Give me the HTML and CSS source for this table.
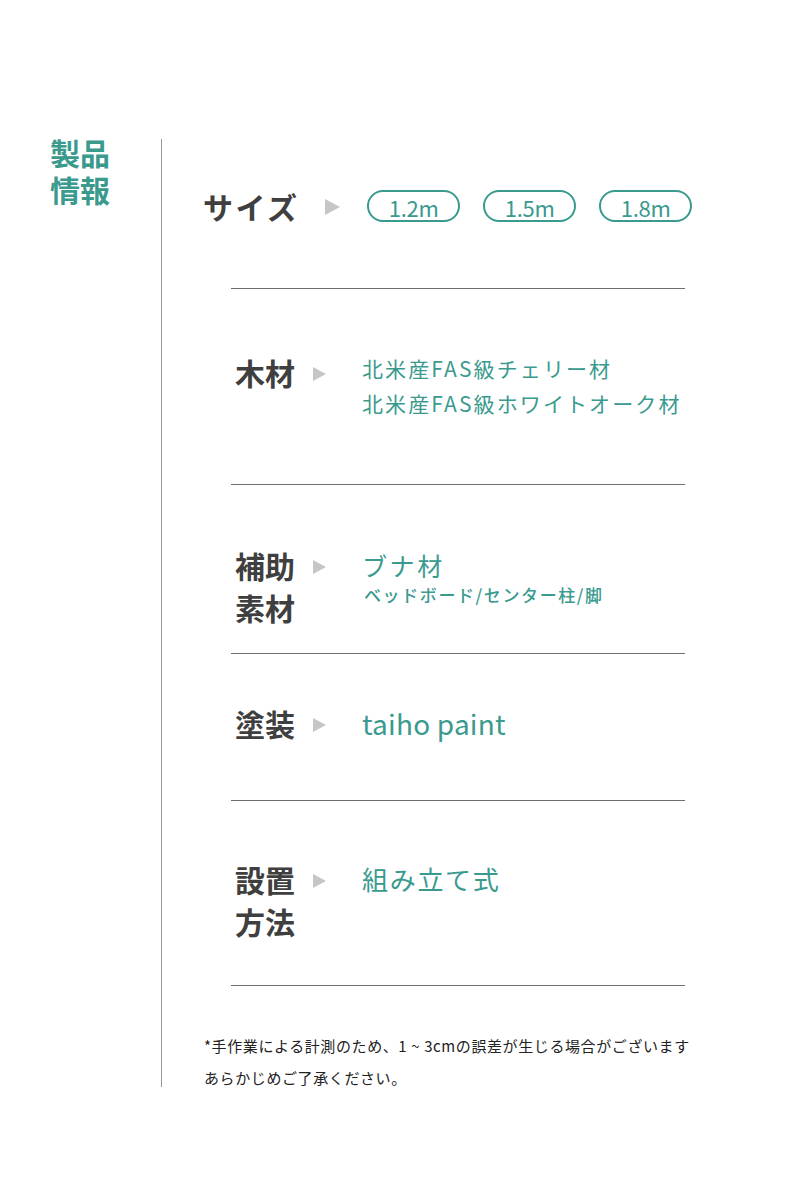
FILE: index.html
```html
<!DOCTYPE html>
<html lang="ja">
<head>
<meta charset="utf-8">
<title>製品情報</title>
<link rel="stylesheet" href="styles.css">
</head>
<body>
<div class="page">
  <aside class="side">
    <h1 class="heading"><span class="heading-line">製品</span><span class="heading-line">情報</span></h1>
  </aside>
  <div class="divider"></div>
  <main class="content">
    <div class="size-row">
      <div class="label label-size">サイズ</div>
      <span class="tri tri-lg"></span>
      <div class="pills">
        <span class="pill">1.2m</span>
        <span class="pill">1.5m</span>
        <span class="pill">1.8m</span>
      </div>
    </div>
    <div class="rule-first"></div>

    <section class="spec spec-wood">
      <div class="label">木材</div>
      <span class="tri"></span>
      <div class="value value-wood">北米産FAS級チェリー材<br>北米産FAS級ホワイトオーク材</div>
    </section>

    <section class="spec spec-sub">
      <div class="label">補助<br>素材</div>
      <span class="tri"></span>
      <div class="value">
        <div class="value-main">ブナ材</div>
        <div class="value-note">ベッドボード/センター柱/脚</div>
      </div>
    </section>

    <section class="spec spec-paint">
      <div class="label">塗装</div>
      <span class="tri"></span>
      <div class="value value-paint">taiho paint</div>
    </section>

    <section class="spec spec-setup">
      <div class="label">設置<br>方法</div>
      <span class="tri"></span>
      <div class="value value-setup">組み立て式</div>
    </section>

    <p class="note">*手作業による計測のため、1 ~ 3cmの誤差が生じる場合がございます<br>あらかじめご了承ください。</p>
  </main>
</div>
</body>
</html>
```

FILE: styles.css
```css
html, body {
  margin: 0;
  padding: 0;
  background: #ffffff;
}

body {
  font-family: "Noto Sans CJK JP", "Noto Sans", sans-serif;
  color: #3d3d3d;
}

.page {
  display: flex;
  align-items: flex-start;
  padding-top: 134px;
}

.side {
  width: 161px;
  flex: none;
  padding-left: 50px;
  box-sizing: border-box;
}

.heading {
  margin: 0;
  font-size: 30px;
  font-weight: 700;
  color: #3a9a8e;
  display: flex;
  flex-direction: column;
  gap: 0;
}

.heading-line {
  display: block;
  line-height: 36.5px;
}

.divider {
  flex: none;
  width: 0;
  height: 948px;
  margin-top: 5px;
  border-left: 1.5px solid #9a9a9a;
}

.content {
  flex: 1;
  padding-top: 56px;
}

.size-row {
  display: flex;
  align-items: center;
  height: 32px;
  padding-left: 41px;
}

.label {
  font-size: 30px;
  font-weight: 700;
  line-height: 42px;
  color: #3f3f3f;
  flex: none;
}

.label-size {
  line-height: 32px;
  letter-spacing: 2.5px;
}

.tri {
  flex: none;
  width: 0;
  height: 0;
  border-left: 13px solid #c6c6c6;
  border-top: 7px solid transparent;
  border-bottom: 7px solid transparent;
}

.tri-lg {
  border-left-width: 15px;
  border-top-width: 8px;
  border-bottom-width: 8px;
  margin-left: 25.5px;
  margin-top: 2px;
}

.pills {
  display: flex;
  gap: 23px;
  margin-left: 27px;
}

.pill {
  box-sizing: border-box;
  width: 93px;
  height: 32px;
  border: 2px solid #3a9a8e;
  border-radius: 16px;
  display: flex;
  align-items: center;
  justify-content: center;
  font-size: 22px;
  letter-spacing: -0.3px;
  color: #3a9a8e;
  line-height: 1;
  padding-top: 1px;
}

.rule-first {
  margin: 66px 0 0 69px;
  width: 454px;
  border-top: 1px solid #6e6e6e;
}

.spec {
  display: flex;
  align-items: flex-start;
  box-sizing: border-box;
  width: 454px;
  margin-left: 69px;
  padding-left: 4px;
  border-bottom: 1px solid #6e6e6e;
}

.spec .tri {
  margin-left: 18px;
  margin-top: 16px;
}

.value {
  margin-left: 36px;
  color: #3a9a8e;
}

.spec-wood {
  height: 196px;
  padding-top: 62px;
}

.value-wood {
  font-size: 21px;
  line-height: 34.5px;
  letter-spacing: 2.1px;
  margin-top: 0;
}

.spec-sub {
  height: 169px;
  padding-top: 59px;
}

.value-main {
  font-size: 25px;
  line-height: 32px;
  letter-spacing: 2.6px;
  margin-top: 5px;
}

.value-note {
  font-size: 17px;
  line-height: 20px;
  font-weight: 500;
  letter-spacing: 1.6px;
  margin-top: 4px;
  margin-left: 2px;
}

.spec-paint {
  height: 147px;
  padding-top: 48px;
}

.value-paint {
  font-size: 28px;
  line-height: 42px;
  letter-spacing: 0.2px;
}

.spec-setup {
  height: 185px;
  padding-top: 57px;
}

.value-setup {
  font-size: 26px;
  line-height: 42px;
  letter-spacing: 1.7px;
}

.note {
  margin: 44px 0 0 42px;
  font-size: 15px;
  line-height: 31.7px;
  color: #222222;
  letter-spacing: 0.6px;
}
```
